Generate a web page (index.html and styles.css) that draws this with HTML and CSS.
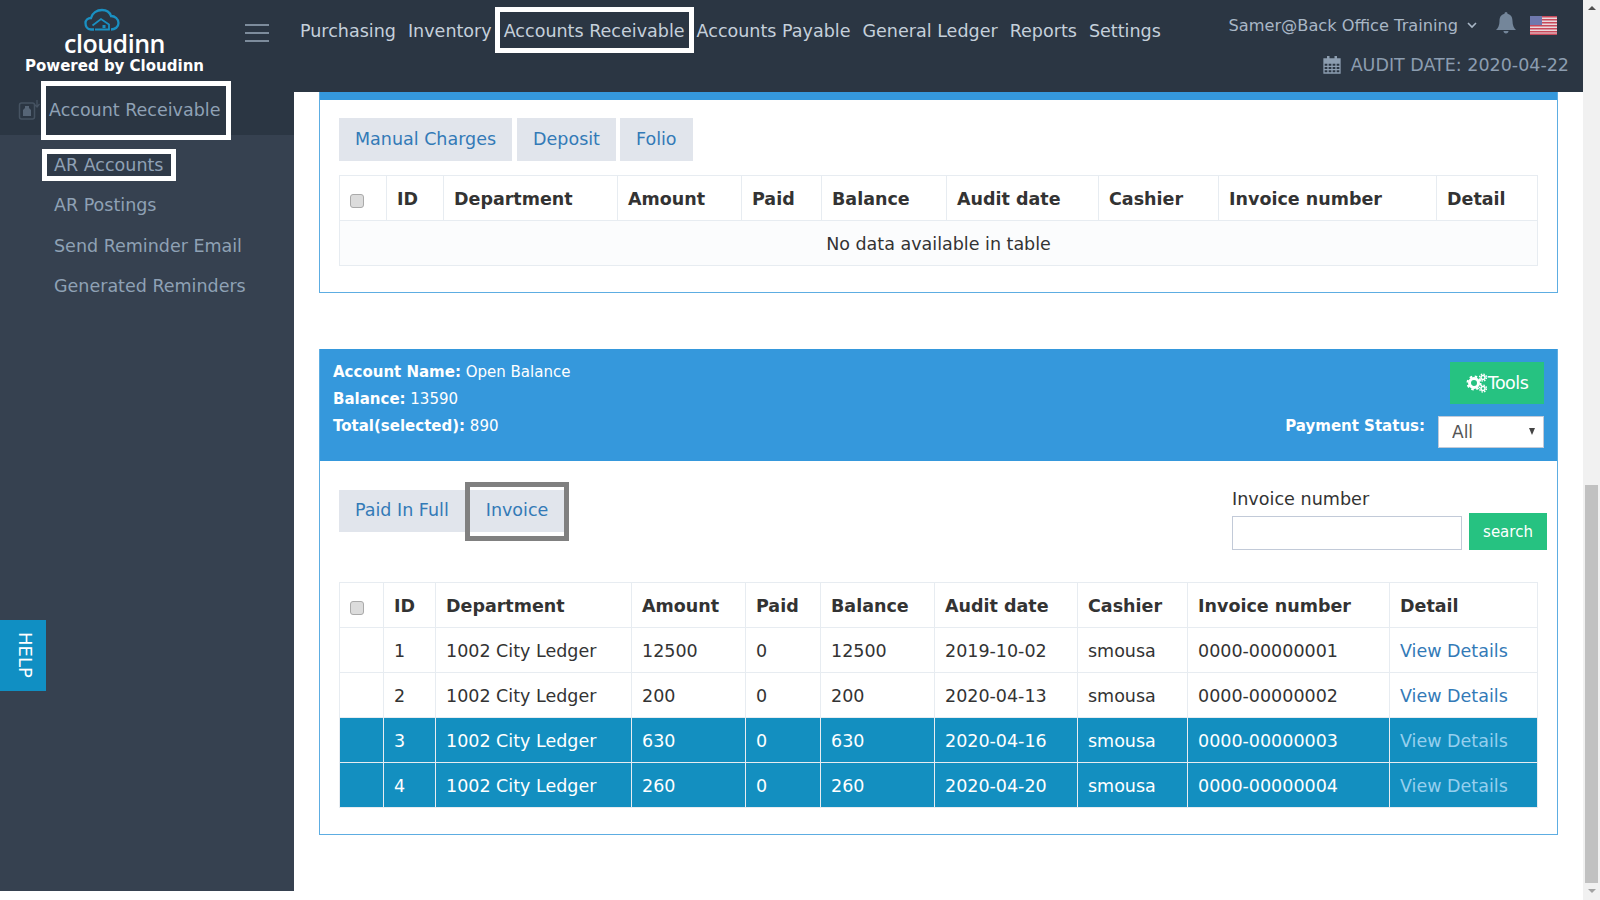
FILE: index.html
```html
<!DOCTYPE html>
<html lang="en">
<head>
    <meta charset="UTF-8">
    <title>Accounts Receivable</title>
    <link rel="stylesheet" href="styles.css">
</head>
<body>
<div class="app">
    <header class="topbar">
        <div class="brand">
            <svg class="brand-cloud" width="36" height="24" viewBox="0 0 36 24">
                <path d="M10 21.500 H7 C3 21.500 1.500 18 1.500 15 C1.500 12 4 10 7 10 C8 5 13 2 18 2 C23 2 26 5 27 8 C31 8 34.500 11 34.500 15 C34.500 19 31 21.500 27 21.500" fill="none" stroke="#1a90c2" stroke-width="2.300"/>
                <path d="M8.500 17.500 L17 11 L25 16.500 V21.500 H11" fill="none" stroke="#1a90c2" stroke-width="1.800"/>
                <rect x="18.500" y="17" width="3" height="3" fill="#1a90c2"/>
            </svg>
            <div class="brand-name">cloudinn</div>
            <div class="brand-sub">Powered by Cloudinn</div>
        </div>
        <div class="burger"><span></span><span></span><span></span></div>
        <nav class="mainnav">
            <a>Purchasing</a>
            <a>Inventory</a>
            <a class="boxed">Accounts Receivable</a>
            <a>Accounts Payable</a>
            <a>General Ledger</a>
            <a>Reports</a>
            <a>Settings</a>
        </nav>
        <div class="topright">
            <div class="userline">
                <span class="username">Samer@Back Office Training</span>
                <svg class="chev" width="10" height="7" viewBox="0 0 10 7"><path d="M1 1 L5 5 L9 1" fill="none" stroke="#a9b7c6" stroke-width="1.600"/></svg>
                <svg class="bell" width="20" height="22" viewBox="0 0 20 22"><path d="M10 0 C11 0 11.500 .8 11.500 1.800 C15 2.600 16.500 5.500 16.500 9 C16.500 13.500 18 16 20 18 L0 18 C2 16 3.500 13.500 3.500 9 C3.500 5.500 5 2.600 8.500 1.800 C8.500 .8 9 0 10 0 Z M7.500 19 L12.500 19 C12.500 20.500 11.500 21.500 10 21.500 C8.500 21.500 7.500 20.500 7.500 19 Z" fill="#74869a"/></svg>
                <svg class="flag" width="27" height="19" viewBox="0 0 27 19">
                    <rect width="27" height="19" fill="#e9d9dc"/>
                    <g fill="#c9495a">
                        <rect width="27" height="1.500"/><rect y="3" width="27" height="1.500"/><rect y="6" width="27" height="1.500"/><rect y="9" width="27" height="1.500"/><rect y="12" width="27" height="1.500"/><rect y="15" width="27" height="1.500"/><rect y="17.500" width="27" height="1.500"/>
                    </g>
                    <rect width="12" height="9" fill="#6f78ad"/>
                </svg>
            </div>
            <div class="auditline">
                <svg width="18" height="18" viewBox="0 0 18 18"><path d="M1 3 H17 V17 H1 Z M1 7 H17 M1 10.300 H17 M1 13.600 H17 M5 7 V17 M9 7 V17 M13 7 V17" fill="none" stroke="#8c9db0" stroke-width="1.300"/><rect x="1" y="3" width="16" height="4" fill="#8c9db0"/><rect x="4" y="0" width="2.500" height="5" fill="#8c9db0"/><rect x="11.500" y="0" width="2.500" height="5" fill="#8c9db0"/></svg>
                <span>AUDIT DATE: 2020-04-22</span>
            </div>
        </div>
    </header>

    <div class="body-row">
        <aside class="sidebar">
            <div class="side-head">
                <svg class="side-icon" width="22" height="20" viewBox="0 0 22 20"><rect x="1.500" y="3" width="15" height="16" rx="2" fill="none" stroke="#465362" stroke-width="1.500"/><path d="M7 6 H11 V8 L13 10 V16 H5 V10 L7 8 Z" fill="#566576"/><path d="M19 0 V6 M16.500 4.500 L19 7 L21.500 4" fill="none" stroke="#465362" stroke-width="1.300"/></svg>
                <span class="side-title boxed">Account Receivable</span>
            </div>
            <ul class="side-menu">
                <li><span class="boxed">AR Accounts</span></li>
                <li><span>AR Postings</span></li>
                <li><span>Send Reminder Email</span></li>
                <li><span>Generated Reminders</span></li>
            </ul>
        </aside>

        <main class="content">
            <section class="panel panel-first">
                <div class="panel-strip"></div>
                <div class="panel-body">
                    <div class="tabs">
                        <a class="tab">Manual Charges</a>
                        <a class="tab">Deposit</a>
                        <a class="tab">Folio</a>
                    </div>
                    <table class="grid grid-a">
                        <colgroup>
                            <col class="a1"><col class="a2"><col class="a3"><col class="a4"><col class="a5"><col class="a6"><col class="a7"><col class="a8"><col class="a9"><col class="a10">
                        </colgroup>
                        <thead>
                            <tr>
                                <th><input type="checkbox" class="check"></th>
                                <th>ID</th><th>Department</th><th>Amount</th><th>Paid</th><th>Balance</th><th>Audit date</th><th>Cashier</th><th>Invoice number</th><th>Detail</th>
                            </tr>
                        </thead>
                        <tbody>
                            <tr class="odd"><td colspan="10" class="empty">No data available in table</td></tr>
                        </tbody>
                    </table>
                </div>
            </section>

            <section class="panel panel-second">
                <div class="panel-head">
                    <div class="account-info">
                        <div><b>Account Name:</b> Open Balance</div>
                        <div><b>Balance:</b> 13590</div>
                        <div><b>Total(selected):</b> 890</div>
                    </div>
                    <div class="head-actions">
                        <button class="tools">
                            <svg width="22" height="20" viewBox="0 0 22 20">
                                <circle cx="8" cy="10" r="4.500" fill="none" stroke="#fff" stroke-width="3"/>
                                <circle cx="8" cy="10" r="6.500" fill="none" stroke="#fff" stroke-width="2" stroke-dasharray="2.500 2.600"/>
                                <circle cx="17" cy="4.500" r="2" fill="none" stroke="#fff" stroke-width="1.500"/>
                                <circle cx="17" cy="4.500" r="3.500" fill="none" stroke="#fff" stroke-width="1.300" stroke-dasharray="1.500 1.250"/>
                                <circle cx="17" cy="15.500" r="2" fill="none" stroke="#fff" stroke-width="1.500"/>
                                <circle cx="17" cy="15.500" r="3.500" fill="none" stroke="#fff" stroke-width="1.300" stroke-dasharray="1.500 1.250"/>
                            </svg>Tools
                        </button>
                        <div class="status-row">
                            <b>Payment Status:</b>
                            <div class="select-wrap">
                                <select class="status-select"><option>All</option></select>
                            </div>
                        </div>
                    </div>
                </div>
                <div class="panel-body panel-body-second">
                    <div class="toolbar">
                        <div class="tabs tabs-joined">
                            <a class="tab">Paid In Full</a>
                            <a class="tab tab-focus">Invoice</a>
                        </div>
                        <div class="search-box">
                            <label class="search-label">Invoice number</label>
                            <div class="search-row">
                                <input type="text" class="search-input">
                                <button class="search-btn">search</button>
                            </div>
                        </div>
                    </div>
                    <table class="grid grid-b">
                        <colgroup>
                            <col class="b1"><col class="b2"><col class="b3"><col class="b4"><col class="b5"><col class="b6"><col class="b7"><col class="b8"><col class="b9"><col class="b10">
                        </colgroup>
                        <thead>
                            <tr>
                                <th><input type="checkbox" class="check"></th>
                                <th>ID</th><th>Department</th><th>Amount</th><th>Paid</th><th>Balance</th><th>Audit date</th><th>Cashier</th><th>Invoice number</th><th>Detail</th>
                            </tr>
                        </thead>
                        <tbody>
                            <tr><td></td><td>1</td><td>1002 City Ledger</td><td>12500</td><td>0</td><td>12500</td><td>2019-10-02</td><td>smousa</td><td>0000-00000001</td><td><a>View Details</a></td></tr>
                            <tr><td></td><td>2</td><td>1002 City Ledger</td><td>200</td><td>0</td><td>200</td><td>2020-04-13</td><td>smousa</td><td>0000-00000002</td><td><a>View Details</a></td></tr>
                            <tr class="selected"><td></td><td>3</td><td>1002 City Ledger</td><td>630</td><td>0</td><td>630</td><td>2020-04-16</td><td>smousa</td><td>0000-00000003</td><td><a>View Details</a></td></tr>
                            <tr class="selected"><td></td><td>4</td><td>1002 City Ledger</td><td>260</td><td>0</td><td>260</td><td>2020-04-20</td><td>smousa</td><td>0000-00000004</td><td><a>View Details</a></td></tr>
                        </tbody>
                    </table>
                </div>
            </section>
        </main>
    </div>
    <div class="help-tab">HELP</div>
</div>
<div class="scrollbar">
    <div class="arrow-up"></div>
    <div class="thumb"></div>
    <div class="arrow-down"></div>
</div>
</body>
</html>
```

FILE: styles.css
```css
* {
    box-sizing: border-box;
}

body {
    margin: 0;
    display: flex;
    height: 900px;
    overflow: hidden;
    background-color: #fff;
    color: #333;
    font-family: "DejaVu Sans", sans-serif;
    font-size: 17px;
}

.app {
    flex: 1;
    min-width: 0;
    position: relative;
}

/* top bar */
.topbar {
    display: flex;
    height: 92px;
    background-color: #2b3643;
}

.brand {
    width: 229px;
    padding-top: 8px;
    display: flex;
    flex-direction: column;
    align-items: center;
    flex-shrink: 0;
}

.brand-cloud {
    display: block;
    margin-left: -25px;
}

.brand-name {
    color: #fff;
    font-family: "Open Sans", sans-serif;
    font-weight: 600;
    font-size: 25px;
    line-height: 22px;
    letter-spacing: -0.500px;
}

.brand-sub {
    color: #fff;
    font-weight: bold;
    font-size: 15px;
    line-height: 18px;
    margin-top: 3px;
    white-space: nowrap;
}

.burger {
    width: 24px;
    margin: 24px 0 0 16px;
    display: flex;
    flex-direction: column;
    gap: 6px;
    flex-shrink: 0;
}

.burger span {
    display: block;
    height: 2px;
    background-color: #7d8c9c;
}

.mainnav {
    display: flex;
    align-items: flex-start;
    margin-left: 25px;
    padding-top: 8px;
    white-space: nowrap;
}

.mainnav a {
    color: #c5d0db;
    font-size: 17.550px;
    line-height: 46px;
    padding: 0 6px;
}

.mainnav a.boxed {
    color: #c5d0db;
    border: 5px solid #fff;
    line-height: 34px;
    padding: 2px 4px 0 4px;
    margin: -1px -3px 0 -3px;
}

.topright {
    flex: 1;
    padding-right: 26px;
    display: flex;
    flex-direction: column;
    align-items: flex-end;
    white-space: nowrap;
}

.userline {
    display: flex;
    align-items: center;
    height: 34px;
    margin-top: 8px;
    color: #a9b7c6;
    font-size: 16.200px;
}

.chev {
    margin-left: 9px;
}

.bell {
    margin-left: 19px;
    margin-top: -4px;
}

.flag {
    margin-left: 14px;
}

.auditline {
    display: flex;
    align-items: center;
    gap: 10px;
    margin-top: 6px;
    margin-right: -12px;
    color: #8c9db0;
    font-size: 17.500px;
    line-height: 34px;
}

/* sidebar */
.body-row {
    display: flex;
}

.sidebar {
    width: 294px;
    height: 799px;
    flex-shrink: 0;
    background-color: #364150;
    color: #8fa1b5;
    font-size: 17.500px;
}

.side-head {
    height: 43px;
    background-color: #2b3643;
    display: flex;
    align-items: flex-start;
    position: relative;
}

.side-icon {
    margin: 8px 0 0 18px;
}

.side-title.boxed {
    position: absolute;
    left: 41px;
    top: -11px;
    width: 190px;
    height: 59px;
    border: 5px solid #fff;
    padding-left: 3px;
    line-height: 49px;
    white-space: nowrap;
}

.side-menu {
    list-style: none;
    margin: 0;
    padding: 10px 0 0 54px;
}

.side-menu li {
    height: 40.400px;
    line-height: 40px;
}

.side-menu .boxed {
    display: inline-block;
    border: 5px solid #fff;
    margin-left: -12px;
    padding: 1px 8px 0 7px;
    line-height: 21px;
    background-color: #2f3a48;
}

/* content */
.content {
    flex: 1;
    min-width: 0;
    padding: 0 25px;
}

.panel {
    border: 1px solid #5dade2;
    border-width: 0 1px 1px 1px;
}

.panel-strip {
    height: 8px;
    background-color: #3598dc;
}

.panel-first {
    height: 201px;
}

.panel-second {
    margin-top: 56px;
    height: 486px;
}

.panel-body {
    padding: 18px 19px 0 19px;
}

.tabs {
    display: flex;
    gap: 4px;
}

.tab {
    display: block;
    background-color: #e1e5ec;
    color: #337ab7;
    font-size: 17.500px;
    line-height: 43px;
    padding: 0 16px;
}

.tab:first-child {
    margin-right: 1px;
}

/* tables */
.grid {
    width: 1198px;
    table-layout: fixed;
    border-collapse: collapse;
    margin-top: 14px;
    font-size: 17.500px;
}

.grid th,
.grid td {
    border: 1px solid #e7ecf1;
    height: 45px;
    padding: 2px 10px 0 10px;
    text-align: left;
    white-space: nowrap;
}

.grid th {
    font-weight: bold;
    background-color: #fff;
}

.grid td {
    background-color: #fff;
}

.grid td a {
    color: #337ab7;
}

.grid .odd td {
    background-color: #fbfcfd;
}

.grid .empty {
    text-align: center;
}

.grid .selected td {
    background-color: #138fc0;
    color: #fff;
    border-color: #e7ecf1;
}

.grid .selected td a {
    color: #96cfee;
}

.check {
    appearance: none;
    display: block;
    width: 14px;
    height: 14px;
    margin: 3px 0 0 0;
    background-color: #dcdcdc;
    border: 1px solid #aaa;
    border-radius: 3px;
}

.a1 { width: 47px; }
.a2 { width: 57px; }
.a3 { width: 174px; }
.a4 { width: 124px; }
.a5 { width: 80px; }
.a6 { width: 125px; }
.a7 { width: 152px; }
.a8 { width: 120px; }
.a9 { width: 218px; }
.a10 { width: 101px; }

.b1 { width: 44px; }
.b2 { width: 52px; }
.b3 { width: 196px; }
.b4 { width: 114px; }
.b5 { width: 75px; }
.b6 { width: 114px; }
.b7 { width: 143px; }
.b8 { width: 110px; }
.b9 { width: 202px; }
.b10 { width: 148px; }

/* blue account header */
.panel-head {
    height: 112px;
    background-color: #3598dc;
    color: #fff;
    display: flex;
    justify-content: space-between;
    padding: 10px 13px 0 13px;
}

.account-info {
    font-size: 15px;
    line-height: 27px;
}

.head-actions {
    display: flex;
    flex-direction: column;
    align-items: flex-end;
    padding-top: 3px;
}

.tools {
    display: flex;
    align-items: center;
    justify-content: center;
    width: 94px;
    height: 42px;
    background-color: #26c281;
    border: none;
    color: #fff;
    font-family: inherit;
    font-size: 17.500px;
    letter-spacing: -0.500px;
}

.status-row {
    display: flex;
    align-items: flex-start;
    gap: 13px;
    margin-top: 12px;
    font-size: 15px;
    line-height: 20px;
}

.select-wrap {
    position: relative;
    width: 106px;
    height: 32px;
}

.select-wrap::after {
    content: "";
    position: absolute;
    right: 9px;
    top: 12px;
    border-style: solid;
    border-width: 7px 3.500px 0 3.500px;
    border-color: #444 transparent transparent transparent;
}

.status-select {
    appearance: none;
    width: 100%;
    height: 100%;
    border: 1px solid #c2cad8;
    border-radius: 0;
    background-color: #fff;
    color: #555;
    font-family: inherit;
    font-size: 17px;
    padding-left: 13px;
}

.panel-body-second {
    padding-top: 0;
}

.toolbar {
    display: flex;
    justify-content: space-between;
    height: 121px;
    margin-right: -9px;
}

.tabs-joined {
    gap: 0;
    padding-top: 29px;
    align-items: flex-start;
}

.tabs-joined .tab {
    margin-right: 0;
    line-height: 41px;
    padding-bottom: 1px;
}

.tabs-joined .tab-focus {
    padding: 0 21px 2px 21px;
    outline: 5px solid #808080;
    outline-offset: -5px;
    margin-top: -8px;
    line-height: 57px;
    background: linear-gradient(#fff 8px, #e1e5ec 8px, #e1e5ec 50px, #fff 50px);
}

.search-box {
    padding-top: 26px;
}

.search-label {
    display: block;
    font-size: 17.600px;
    line-height: 25px;
}

.search-row {
    display: flex;
    align-items: flex-end;
    gap: 7px;
    margin-top: 1px;
    height: 37px;
}

.search-input {
    width: 230px;
    height: 34px;
    border: 1px solid #c2cad8;
    background-color: #fff;
}

.search-btn {
    width: 78px;
    height: 37px;
    background-color: #26c281;
    border: none;
    color: #fff;
    font-family: inherit;
    font-size: 15px;
}

.grid-b {
    margin-top: 0;
}

/* help tab */
.help-tab {
    position: absolute;
    left: 0;
    top: 620px;
    width: 46px;
    height: 71px;
    padding: 0 0 2px 4px;
    background-color: #108fc3;
    color: #fff;
    font-size: 18px;
    writing-mode: vertical-rl;
    display: flex;
    align-items: center;
    justify-content: center;
}

/* page scrollbar */
.scrollbar {
    width: 17px;
    flex-shrink: 0;
    background-color: #f1f1f1;
    display: flex;
    flex-direction: column;
    align-items: center;
}

.arrow-up {
    margin-top: 6px;
    border-style: solid;
    border-width: 0 4px 4px 4px;
    border-color: transparent transparent #505050 transparent;
}

.thumb {
    width: 13px;
    height: 398px;
    margin-top: 475px;
    background-color: #c1c1c1;
}

.arrow-down {
    margin-top: 6px;
    border-style: solid;
    border-width: 4px 4px 0 4px;
    border-color: #a3a3a3 transparent transparent transparent;
}
```
